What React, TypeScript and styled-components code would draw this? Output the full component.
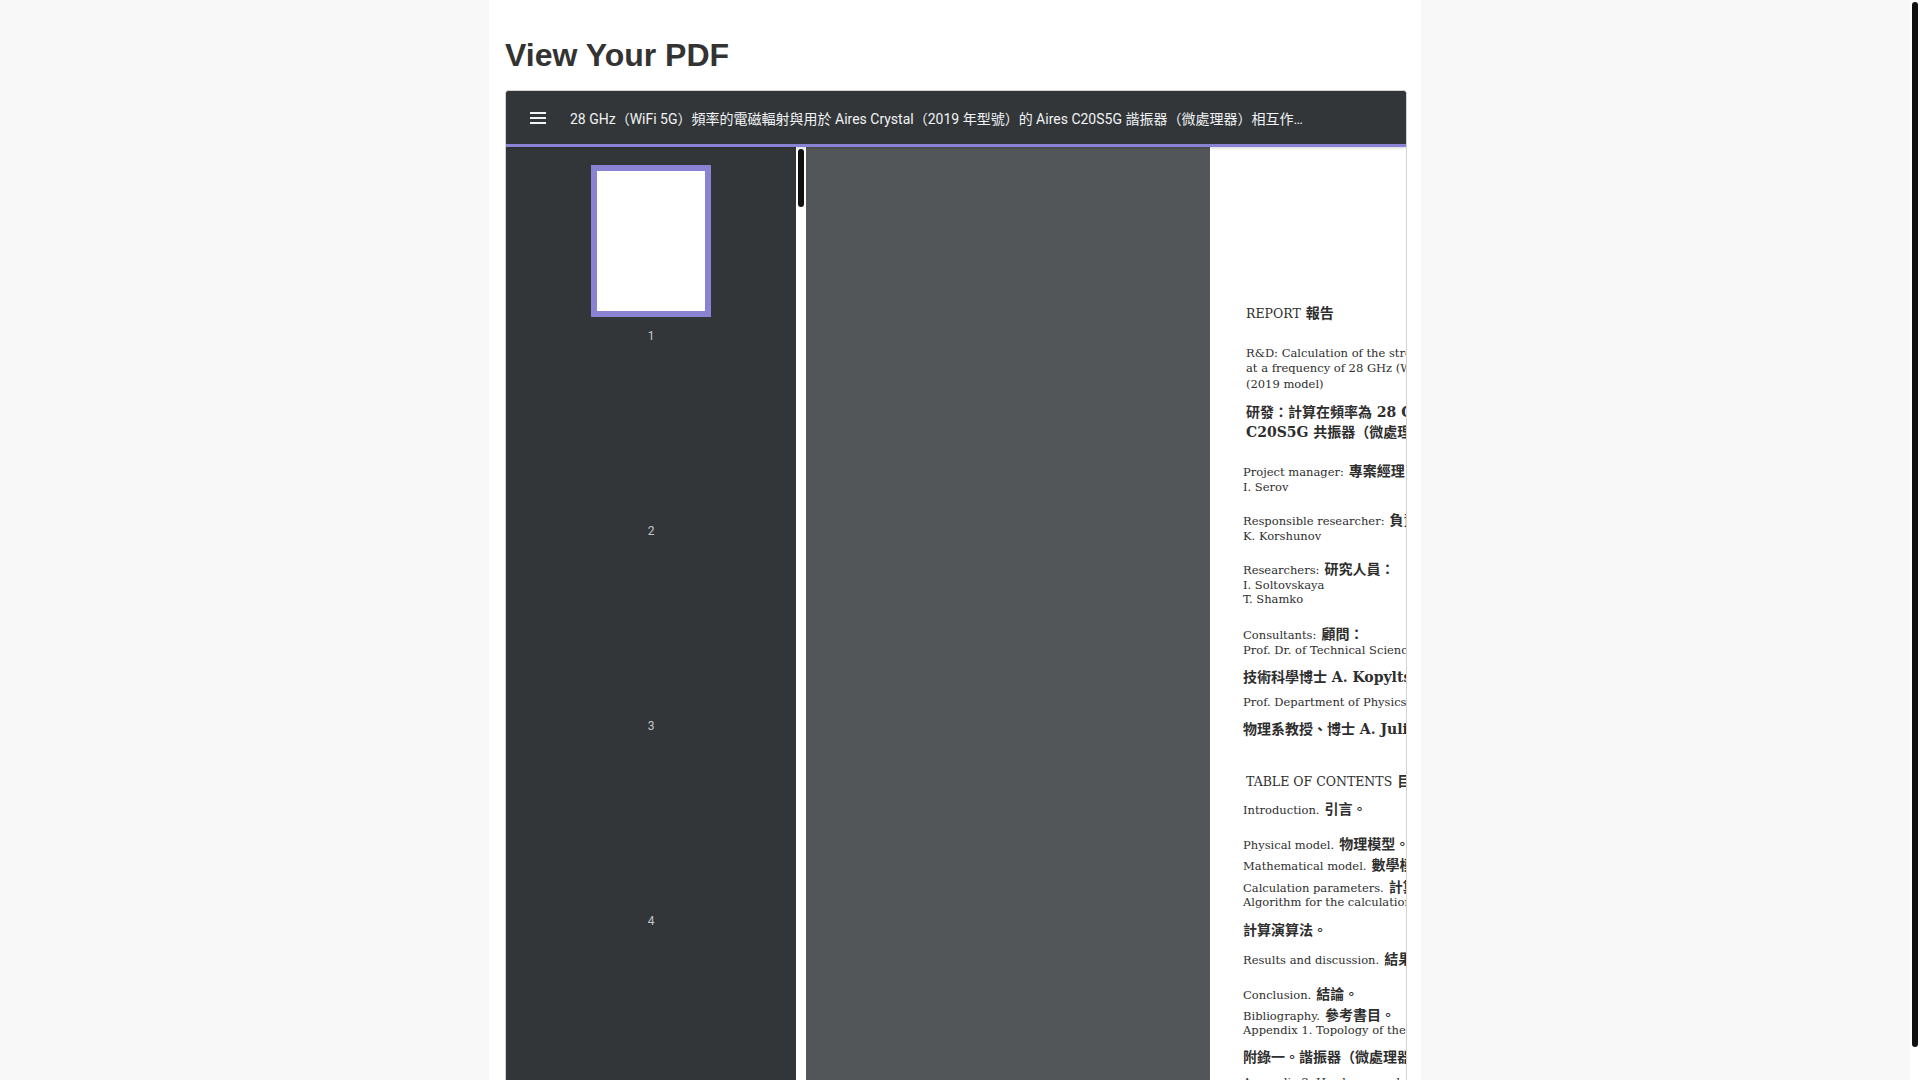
import React from "react";
import styled, { createGlobalStyle } from "styled-components";

type LineKind = "text" | "head" | "bold";

type PageLine = {
  gap: number;
  kind?: LineKind;
  indent?: boolean;
  en?: string;
  zh?: string;
};

const TITLE =
  "28 GHz（WiFi 5G）頻率的電磁輻射與用於 Aires Crystal（2019 年型號）的 Aires C20S5G 諧振器（微處理器）相互作用之研究報告";

const LINES: PageLine[] = [
  { gap: 0, kind: "head", indent: true, en: "REPORT", zh: "報告" },
  { gap: 26, indent: true, en: "R&D: Calculation of the strength of the electromagnetic radiation field" },
  { gap: 0, indent: true, en: "at a frequency of 28 GHz (WiFi 5G) and its interaction with Aires Crystal" },
  { gap: 1, indent: true, en: "(2019 model)" },
  { gap: 10, kind: "bold", indent: true, en: "研發：計算在頻率為 28 GHz（WiFi 5G）的電磁輻射強度及其與 Aires Crystal" },
  { gap: 0, kind: "bold", indent: true, en: "C20S5G 共振器（微處理器）的相互作用" },
  { gap: 21, en: "Project manager:", zh: "專案經理：" },
  { gap: 2, en: "I. Serov" },
  { gap: 17, en: "Responsible researcher:", zh: "負責研究員：" },
  { gap: 2, en: "K. Korshunov" },
  { gap: 17, en: "Researchers:", zh: "研究人員：" },
  { gap: 2, en: "I. Soltovskaya" },
  { gap: -1, en: "T. Shamko" },
  { gap: 19, en: "Consultants:", zh: "顧問：" },
  { gap: 2, en: "Prof. Dr. of Technical Sciences A. Kopyltsov" },
  { gap: 9, kind: "bold", en: "技術科學博士 A. Kopyltsov 教授" },
  { gap: 8, en: "Prof. Department of Physics, Dr. A. Julin" },
  { gap: 9, kind: "bold", en: "物理系教授、博士 A. Julin" },
  { gap: 34, kind: "head", indent: true, en: "TABLE OF CONTENTS", zh: "目錄" },
  { gap: 13, en: "Introduction.", zh: "引言。" },
  { gap: 20, en: "Physical model.", zh: "物理模型。" },
  { gap: 6, en: "Mathematical model.", zh: "數學模型。" },
  { gap: 7, en: "Calculation parameters.", zh: "計算參數。" },
  { gap: 1, en: "Algorithm for the calculation of the electromagnetic field." },
  { gap: 10, kind: "bold", en: "計算演算法。" },
  { gap: 11, en: "Results and discussion.", zh: "結果與討論。" },
  { gap: 20, en: "Conclusion.", zh: "結論。" },
  { gap: 6, en: "Bibliography.", zh: "參考書目。" },
  { gap: 1, en: "Appendix 1. Topology of the resonator (microprocessor)." },
  { gap: 9, kind: "bold", en: "附錄一。諧振器（微處理器）的拓撲結構。" },
  { gap: 8, en: "Appendix 2. Hardware and software." },
];

const PAGE_COUNT = 6;

const FONT_SIZE: Record<LineKind, number> = { text: 11.5, head: 12.5, bold: 14 };

const MenuIcon = () => (
  <svg width="16" height="12" viewBox="0 0 16 12" fill="currentColor">
    <rect x="0" y="0" width="16" height="2" />
    <rect x="0" y="5" width="16" height="2" />
    <rect x="0" y="10" width="16" height="2" />
  </svg>
);

const App = () => {
  return (
    <>
      <GlobalStyle />
      <Shell>
        <Scroller>
          <Wrapper>
            <Heading>View Your PDF</Heading>
            <Viewer>
              <Toolbar>
                <MenuButton>
                  <MenuIcon />
                </MenuButton>
                <DocTitle>{TITLE}</DocTitle>
              </Toolbar>
              <Body>
                <SidePanel>
                  <ThumbList>
                    {Array.from({ length: PAGE_COUNT }, (_, i) => (
                      <Thumb key={i}>
                        <ThumbPage $active={i === 0} />
                        <ThumbLabel>{i + 1}</ThumbLabel>
                      </Thumb>
                    ))}
                  </ThumbList>
                  <ScrollTrack>
                    <ScrollThumb $length={58} />
                  </ScrollTrack>
                </SidePanel>
                <Canvas>
                  <Page>
                    {LINES.map((l, i) => (
                      <Line key={i} $gap={l.gap} $kind={l.kind ?? "text"} $indent={!!l.indent}>
                        {l.en}
                        {l.zh && <Cjk>{l.zh}</Cjk>}
                      </Line>
                    ))}
                  </Page>
                </Canvas>
              </Body>
            </Viewer>
          </Wrapper>
        </Scroller>
        <ScrollTrack>
          <ScrollThumb $length={1045} />
        </ScrollTrack>
      </Shell>
    </>
  );
};

export default App;

const GlobalStyle = createGlobalStyle`
  html, body {
    margin: 0;
    padding: 0;
    background: #f8f8f8;
  }
  body {
    font-family: "Liberation Sans", Arial, sans-serif;
  }
`;

const Shell = styled.div`
  display: flex;
  height: 100vh;
  overflow: hidden;
`;

const Scroller = styled.div`
  flex: 1;
  min-width: 0;
  overflow: hidden;
`;

const ScrollTrack = styled.div`
  flex-shrink: 0;
  box-sizing: border-box;
  width: 10px;
  padding: 2px;
  background: #fff;
`;

const ScrollThumb = styled.div<{ $length: number }>`
  height: ${(p) => p.$length}px;
  border-radius: 3px;
  background: #111;
`;

const Wrapper = styled.main`
  box-sizing: border-box;
  width: 932px;
  height: 1116px;
  margin: 0 auto;
  padding: 38px 14px 16px 16px;
  background: #fff;
`;

const Heading = styled.h1`
  margin: 0 0 17px;
  font-family: "Liberation Sans", Arial, sans-serif;
  font-size: 32px;
  line-height: 35px;
  font-weight: 700;
  color: #333;
`;

const Viewer = styled.section`
  display: flex;
  flex-direction: column;
  width: 900px;
  height: 1008px;
  border: 1px solid #d3d3d3;
  border-radius: 4px 4px 0 0;
  overflow: hidden;
  background: #323639;
`;

const Toolbar = styled.header`
  position: relative;
  z-index: 1;
  display: flex;
  align-items: center;
  gap: 24px;
  flex-shrink: 0;
  height: 53px;
  padding: 0 0 0 24px;
  background: #323639;
  border-bottom: 3px solid #8a83d4;
  box-shadow: 0 1px 3px rgba(0, 0, 0, 0.18);
`;

const MenuButton = styled.span`
  display: flex;
  color: #f1f3f4;
`;

const DocTitle = styled.span`
  max-width: 735px;
  overflow: hidden;
  white-space: nowrap;
  text-overflow: ellipsis;
  font-family: Roboto, "Noto Sans CJK TC", sans-serif;
  font-size: 14px;
  color: #f1f3f4;
`;

const Body = styled.div`
  display: flex;
  flex: 1;
  min-height: 0;
`;

const SidePanel = styled.nav`
  display: flex;
  flex-shrink: 0;
  width: 300px;
  background: #323639;
`;

const ThumbList = styled.div`
  flex: 1;
  overflow: hidden;
  padding-top: 18px;
`;

const Thumb = styled.div`
  display: flex;
  flex-direction: column;
  align-items: center;
  height: 195px;
`;

const ThumbPage = styled.div<{ $active: boolean }>`
  box-sizing: border-box;
  width: 120px;
  height: 152px;
  border: 6px solid ${(p) => (p.$active ? "#8a83d4" : "transparent")};
  background: ${(p) => (p.$active ? "#fff" : "transparent")};
`;

const ThumbLabel = styled.span`
  margin-top: 11px;
  font-family: Roboto, sans-serif;
  font-size: 12px;
  line-height: 16px;
  color: #c4c7c9;
`;

const Canvas = styled.div`
  display: flex;
  flex: 1;
  overflow: hidden;
  padding-left: 404px;
  background: #525659;
`;

const Page = styled.article`
  flex-shrink: 0;
  width: 620px;
  padding: 158px 0 0 33px;
  background: #fff;
  color: #2e2e2e;
  font-family: "DejaVu Serif", "Noto Sans CJK TC", serif;
`;

const Line = styled.div<{ $gap: number; $kind: LineKind; $indent: boolean }>`
  margin-top: ${(p) => p.$gap}px;
  padding-left: ${(p) => (p.$indent ? 3 : 0)}px;
  height: ${(p) => (p.$kind === "bold" ? 20 : 15)}px;
  line-height: ${(p) => (p.$kind === "bold" ? 20 : 15)}px;
  font-size: ${(p) => FONT_SIZE[p.$kind]}px;
  font-weight: ${(p) => (p.$kind === "bold" ? 700 : 400)};
  white-space: nowrap;
`;

const Cjk = styled.span`
  margin-left: 5px;
  font-family: "Noto Sans CJK TC", sans-serif;
  font-weight: 700;
  font-size: 14px;
`;
